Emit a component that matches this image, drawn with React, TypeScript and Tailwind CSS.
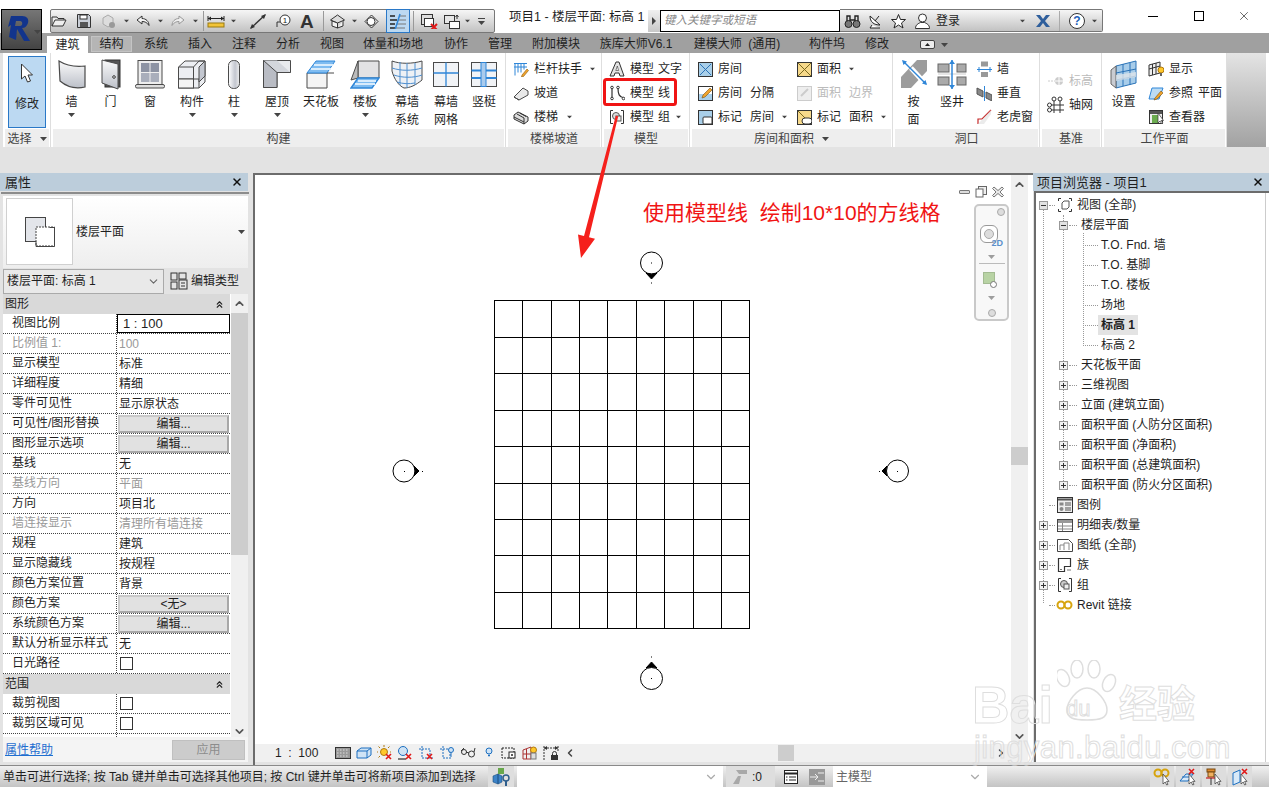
import type { ReactNode } from "react";
import { ChevronDown, ChevronLeft, ChevronRight, ChevronUp, ChevronsUp, X } from "lucide-react";

// shared svg wrapper, coordinates are in px of the icon
function Ic({ w = 16, h = 16, children, className = "" }: { w?: number; h?: number; children: ReactNode; className?: string }) {
  return (
    <svg width={w} height={h} viewBox={`0 0 ${w} ${h}`} className={`shrink-0 ${className}`} fill="none">
      {children}
    </svg>
  );
}

function Caret({ className = "" }: { className?: string }) {
  return (
    <svg width="7" height="4" viewBox="0 0 7 4" className={`shrink-0 ${className}`}>
      <path d="M0 0h7L3.5 4z" fill="#444" />
    </svg>
  );
}

const L = "#4a4a4a";
const B = "#2f86d8";

/* ---------- quick access icons ---------- */
const QOpen = () => (
  <Ic w={17}><path d="M1 13V4h5l1 1.500h6V7M1 13l3-6h11l-3 6z" stroke="#333" fill="#eee" /></Ic>
);
const QSave = () => (
  <Ic w={16}><path d="M1.500 1.500h11l2 2v11h-13z" stroke="#333" fill="#c9ced6" /><rect x="4" y="2" width="7" height="4" fill="#fff" stroke="#333" /><rect x="4" y="9" width="8" height="5" fill="#555" /></Ic>
);
const QSync = () => (
  <Ic w={17}><path d="M3 5l5-3 5 3v6l-5 3-5-3z" stroke="#aaa" fill="#ddd" /><circle cx="12" cy="12" r="3" fill="#999" /></Ic>
);
const QUndo = () => (
  <Ic w={16}><path d="M7 3L2 7l5 4V8.500c3 0 5 1 7 4 0-4-3-7-7-7z" stroke="#333" fill="#f4f4f4" /></Ic>
);
const QRedo = () => (
  <Ic w={16}><path d="M9 3l5 4-5 4V8.500c-3 0-5 1-7 4 0-4 3-7 7-7z" stroke="#999" fill="#eee" /></Ic>
);
const QMeasure = () => (
  <Ic w={18}><path d="M1 3v5M17 3v5M1 5.500h16" stroke="#222" /><path d="M1 5.500l3-2v4zM17 5.500l-3-2v4z" fill="#222" /><rect x="1" y="10" width="16" height="4" fill="#f2c438" stroke="#9a7a10" /></Ic>
);
const QAlign = () => (
  <Ic w={18}><path d="M2 15L16 2" stroke="#333" strokeWidth="1.400" /><path d="M1 16l2-5 3 3zM17 1l-5 2 3 3z" fill="#333" /></Ic>
);
const QTag = () => (
  <Ic w={18}><path d="M2 14V9h3" stroke="#333" /><circle cx="10" cy="7" r="5" stroke="#333" fill="#fff" /><text x="10" y="10" fontSize="8" textAnchor="middle" fill="#222">1</text></Ic>
);
const QHome = () => (
  <Ic w={17}><path d="M1.500 7L8.500 2l7 5-7 3z" fill="#ddd" stroke="#333" /><path d="M3 8v5l5.500 2V10zM14 8v5l-5.500 2" fill="#f3f3f3" stroke="#333" /></Ic>
);
const QThin = () => (
  <Ic w={17}><path d="M2 8.500L8.500 2l6.500 6.500L8.500 15z" stroke="#333" fill="#e6e6e6" /><circle cx="8" cy="8.500" r="4" fill="#fff" stroke="#333" /></Ic>
);
const QLines = () => (
  <Ic w={18}><path d="M1 3h5M1 7h7M1 11h5M1 15h5" stroke="#222" strokeWidth="1.500" /><path d="M10 3h7M9 7h8M8 11h9M7 15h9" stroke="#777" /><path d="M11 1L6 17" stroke={B} strokeWidth="1.500" /></Ic>
);
const QClose = () => (
  <Ic w={18}><rect x="1.500" y="1.500" width="11" height="10" stroke="#333" fill="#ddd" /><rect x="4.500" y="5.500" width="9" height="8" stroke="#333" fill="#fff" /><path d="M11 11l6 6M17 11l-6 6" stroke="#e01818" strokeWidth="2" /></Ic>
);
const QSwitch = () => (
  <Ic w={18}><rect x="1.500" y="2.500" width="10" height="8" stroke="#333" fill="#e6e6e6" /><rect x="6.500" y="8.500" width="10" height="7" stroke="#333" fill="#fff" /><path d="M14 2v4M12.500 4L14 2l1.500 2" stroke="#333" /></Ic>
);

/* ---------- large ribbon icons (30px tall) ---------- */
const Cursor = () => (
  <Ic w={14} h={22}><path d="M1.500 1v15l3.500-3 2.500 6 3-1-2.500-6h4.500z" fill="#fff" stroke="#333" /></Ic>
);
const IcWall = () => (
  <Ic w={30} h={31}><path d="M2 2c8 5 17 6 26 5v21c-9 2-18 0-25-6z" fill="url(#gpanel)" stroke={L} strokeWidth="1.200" /></Ic>
);
const IcDoor = () => (
  <Ic w={22} h={31}><rect x="5" y="1" width="15" height="27" fill="#555" stroke="#333" /><path d="M2 1l16 4v25L2 24z" fill="url(#gpanel)" stroke={L} /><circle cx="14" cy="18" r="1.300" fill="#fff" stroke="#333" /></Ic>
);
const IcWindow = () => (
  <Ic w={30} h={31}><rect x="3" y="1.500" width="24" height="24" fill="#eee" stroke={L} /><rect x="6" y="4" width="8.500" height="9" fill="#8d93a3" /><rect x="15.500" y="4" width="8.500" height="9" fill="#8d93a3" /><rect x="6" y="14" width="8.500" height="9" fill="#a9aebb" /><rect x="15.500" y="14" width="8.500" height="9" fill="#a9aebb" /><rect x="0.500" y="25.500" width="29" height="3.500" rx="1.500" fill="#ddd" stroke={L} /></Ic>
);
const IcComp = () => (
  <Ic w={30} h={31}><path d="M1.500 8L8 2h20v21l-6 6H1.500z" fill="#eceef2" stroke={L} /><path d="M1.500 8h15v12H1.500zM16.500 8L22 2h6" stroke={L} /><path d="M16.500 20H22v9" stroke={L} /><path d="M22 8v15l6-6V2z" fill="#c3c7d0" stroke={L} /><rect x="1.500" y="20" width="15" height="9" fill="#f4f4f4" stroke={L} /></Ic>
);
const IcColumn = () => (
  <Ic w={14} h={31}><rect x="1.500" y="1.500" width="11" height="28" rx="5" fill="url(#gcol)" stroke={L} /></Ic>
);
const IcRoof = () => (
  <Ic w={30} h={31}><path d="M1.500 1.500h27v12H15v15H1.500z" fill="#e9ebee" stroke={L} /><path d="M1.500 1.500L15 13.500h13.500L15 1.500z" fill="#d3d6dc" /><path d="M1.500 1.500V28.500H15V13.500z" fill="#b9bcc4" stroke={L} /><path d="M15 13.500h13.500" stroke={L} /></Ic>
);
const IcCeiling = () => (
  <Ic w={30} h={31}><path d="M1 14v15h20V14z" fill="#f4f4f4" stroke={L} /><path d="M1 14L10 2h19l-8 12z" fill="#7fbcf1" stroke={B} /><path d="M5 10h20M8 6h19" stroke="#d9ecfc" strokeWidth="2" /><path d="M21 14h7" stroke={L} /></Ic>
);
const IcFloor = () => (
  <Ic w={30} h={31}><path d="M8 2h21v17H8z" fill="#e2e2e4" stroke={L} /><path d="M1 21L8 2v17z" fill="#bbb" stroke={L} /><path d="M1 29l7-10h21l-7 10z" fill="#7fbcf1" stroke={B} strokeWidth="1.400" /><path d="M5 25h20M8 22h18" stroke="#d9ecfc" strokeWidth="2" /></Ic>
);
const IcCurtainSys = () => (
  <Ic w={32} h={31}><path d="M1 2c8 3 20 3 30 0v19c-6 5-12 8-18 8C8 27 3 20 1 12z" fill="#eef1f5" stroke={L} /><path d="M1 9c9 3 20 3 30 0M3 16c8 3 20 3 28 0M6 23c6 2 12 2 18 1M9 3v23M16 4v25M24 4v22" stroke="#4f8fcf" /></Ic>
);
const IcCurtainGrid = () => (
  <Ic w={28} h={31}><rect x="1.500" y="3.500" width="25" height="24" fill="#f1f3f6" stroke={L} /><path d="M1.500 14h25M14 3.500v24" stroke={B} strokeWidth="1.300" /></Ic>
);
const IcMullion = () => (
  <Ic w={28} h={31}><rect x="1.500" y="3.500" width="25" height="24" fill="#f1f3f6" stroke={L} /><path d="M1.500 11.500h25M1.500 19h25" stroke={B} strokeWidth="2" /><rect x="11" y="3.500" width="5" height="24" fill="#a9cbed" stroke={B} /></Ic>
);
const IcByFace = () => (
  <Ic w={30} h={31}><path d="M18 1h10v11L12 29H2V18z" fill="#9c9c9c" /><path d="M12 9L22 20" stroke="#fff" strokeWidth="5" /><path d="M5 3l22 22" stroke={B} strokeWidth="1.500" /><path d="M3 1l5 1.500L4.500 6zM28 26l-5-1.500 3.500-3.500z" fill={B} /></Ic>
);
const IcShaft = () => (
  <Ic w={30} h={31}><rect x="1" y="5" width="11" height="8" fill="#aaa" stroke="#666" /><rect x="20" y="5" width="9" height="8" fill="#aaa" stroke="#666" /><rect x="1" y="18" width="11" height="8" fill="#aaa" stroke="#666" /><rect x="20" y="18" width="9" height="8" fill="#aaa" stroke="#666" /><path d="M1 15h28" stroke="#ccc" /><path d="M15 1v29" stroke={B} strokeWidth="1.500" /><path d="M12 5l3-4 3 4zM12 26l3 4 3-4z" fill={B} /></Ic>
);
const IcWpSet = () => (
  <Ic w={28} h={31}><path d="M6 7L26 2v22L6 29z" fill="#a8cdea" stroke="#2a73b8" /><path d="M1 11l5-4v22l-5-4z" fill="#c9ccd2" stroke="#666" /><path d="M6 14l20-4M6 21l20-4M13 5v22M20 4v22" stroke="#2a73b8" /><path d="M6 16l20-3v5l-20 4z" fill="#dfe5ea" opacity=".8" /></Ic>
);

/* ---------- small ribbon icons ---------- */
const IRail = () => (
  <Ic><path d="M1 2.500h13M2 2.500v12M5 2.500v9M8 2.500v9M11 2.500v6" stroke={B} /><path d="M1 6h13" stroke={B} /><path d="M9 14l5-6 1.500 1.500-5 6-2 .5z" fill="#f0a42c" stroke="#8a5a10" strokeWidth=".6" /></Ic>
);
const IRamp = () => (
  <Ic><path d="M1 12L10 3l5 3v4l-9 5z" fill="#e9e9e9" stroke={L} /><path d="M1 12l5 3" stroke={L} /></Ic>
);
const IStair = () => (
  <Ic><path d="M1 6l4-3 10 5v4l-4 3L1 10z" fill="#dcdcdc" stroke="#333" /><path d="M4 5l7 4v6M7 4l6 3.500M1 8l10 5" stroke="#333" /></Ic>
);
const IModelText = () => (
  <Ic><path d="M1 15L7 1h3l5 14h-4l-1-3H6l-1 3z" fill="#e4e4e4" stroke="#333" /><path d="M6.800 9.500h2.800L8.300 5z" fill="#fff" stroke="#333" strokeWidth=".6" /></Ic>
);
const IModelLine = () => (
  <Ic><path d="M3 3v10M9 3c0 6 1 9 6 10" stroke="#333" strokeWidth="1.200" /><circle cx="3" cy="2.500" r="1.300" fill="#fff" stroke="#333" /><circle cx="3" cy="13.500" r="1.300" fill="#fff" stroke="#333" /><circle cx="9" cy="2.500" r="1.300" fill="#fff" stroke="#333" /><circle cx="14.500" cy="13.500" r="1.300" fill="#fff" stroke="#333" /></Ic>
);
const IBracket = ({ fill = "#ddd" }: { fill?: string }) => (
  <Ic><path d="M4 1.500H1.500v13H4M12 1.500h2.500v13H12" stroke="#333" /><circle cx="7" cy="7" r="3.500" fill={fill} stroke="#555" /><rect x="7" y="7" width="5" height="5" fill="#eee" stroke="#555" /></Ic>
);
const IRoom = () => (
  <Ic><rect x="1.500" y="1.500" width="14" height="14" fill="#a9cfe9" stroke="#333" /><path d="M3 3l11 11M14 3L3 14" stroke="#2a73b8" /></Ic>
);
const IRoomSep = () => (
  <Ic><rect x="1.500" y="1.500" width="14" height="14" fill="#fff" stroke="#333" /><rect x="2" y="9" width="13" height="6" fill="#a9cfe9" /><path d="M6 10l7-7 2 2-7 7-3 1z" fill="#f0a42c" stroke="#7a5010" strokeWidth=".6" /></Ic>
);
const IRoomTag = () => (
  <Ic><rect x="1.500" y="1.500" width="14" height="14" fill="#a9cfe9" stroke="#333" /><rect x="6" y="8" width="9" height="7" rx="1" fill="#fff" stroke="#333" /></Ic>
);
const IArea = () => (
  <Ic><rect x="1.500" y="1.500" width="14" height="14" fill="#f7d98a" stroke="#333" /><path d="M2 2l13 13M15 2L2 15" stroke="#7a6a20" /></Ic>
);
const IAreaBound = () => (
  <Ic><rect x="1.500" y="1.500" width="14" height="14" fill="#eee" stroke="#ccc" /><path d="M5 11l7-7" stroke="#ccc" strokeWidth="2" /></Ic>
);
const IAreaTag = () => (
  <Ic><rect x="1.500" y="1.500" width="14" height="14" fill="#f7d98a" stroke="#333" /><path d="M2 2l13 13" stroke="#7a6a20" /><rect x="6" y="9" width="10" height="6" rx="3" fill="#fff" stroke="#333" /></Ic>
);
const IOpenWall = () => (
  <Ic><rect x="5" y="0.500" width="7" height="5" fill="#999" /><rect x="5" y="11" width="7" height="5" fill="#999" /><path d="M1 8.500h15" stroke={B} /><path d="M3 6v5M14 6v5" stroke={B} /></Ic>
);
const IVertical = () => (
  <Ic><path d="M1 3l6 3v6L1 9zM10 7l6 3v6l-6-3z" fill="#888" stroke="#555" /><path d="M8.500 1v15" stroke={B} /></Ic>
);
const IDormer = () => (
  <Ic><path d="M2 15V10h4L15 1" stroke="#c62828" strokeWidth="1.200" /><path d="M2 15l13-14v4L8 15z" fill="#ddd" opacity=".6" /></Ic>
);
const ILevel = () => (
  <Ic w={18}><path d="M1 8h8" stroke="#ccc" strokeDasharray="2 1" /><circle cx="12" cy="8" r="4" fill="#ccc" /><path d="M8 8h8M12 4v8" stroke="#fff" /></Ic>
);
const IGrid = () => (
  <Ic w={18} h={18}><path d="M7 4v13M13 4v13M1 9h16M1 14h16" stroke="#333" /><circle cx="7" cy="3" r="2" fill="#fff" stroke="#333" /><circle cx="13" cy="3" r="2" fill="#fff" stroke="#333" /><circle cx="2.500" cy="9" r="2" fill="#fff" stroke="#333" /><circle cx="2.500" cy="14" r="2" fill="#fff" stroke="#333" /></Ic>
);
const IWpShow = () => (
  <Ic><path d="M1 4l11-3v11L1 15z" fill="#eee" stroke="#333" /><path d="M4.500 3v11M8 2v11M1 8l11-3" stroke="#333" /><circle cx="13" cy="9" r="3" fill="#ffc72a" stroke="#b07a10" /><rect x="12" y="12" width="2" height="3" fill="#666" /></Ic>
);
const IRefPlane = () => (
  <Ic><path d="M4 3h11l-4 11H1z" fill="#bcdcf4" stroke={B} /><path d="M7 13l6-7 2 2-6 6-3 1z" fill="#f0a42c" stroke="#7a5010" strokeWidth=".6" /></Ic>
);
const IViewer = () => (
  <Ic><rect x="1.500" y="1.500" width="13" height="13" fill="#eee" stroke="#333" /><rect x="2" y="2" width="12" height="3" fill="#555" /><rect x="4" y="6" width="7" height="8" fill="#6bab4f" /><path d="M10 4v10l2-2 2 3 1-1-2-2.500h2.500z" fill="#fff" stroke="#333" strokeWidth=".7" /></Ic>
);

/* ---------- status and view bar icons ---------- */
const XMark = ({ x = 9, y = 9 }: { x?: number; y?: number }) => (
  <path d={`M${x} ${y}l5 5M${x + 5} ${y}l-5 5`} stroke="#e01818" strokeWidth="1.600" />
);
const VDetail = () => (
  <Ic><rect x="0.500" y="2.500" width="15" height="11" fill="#999" stroke="#333" /><path d="M2 5h12M2 8h12M2 11h12" stroke="#ddd" strokeDasharray="1.500 1.500" /></Ic>
);
const VCube = () => (
  <Ic><path d="M1 6l4-3h10v7l-4 3H1z" fill="#cfe3f5" stroke="#1c6fc0" /><path d="M1 6h10v7M11 6l4-3" stroke="#1c6fc0" /></Ic>
);
const VSun = () => (
  <Ic><circle cx="7" cy="7" r="3.500" fill="#ffc72a" stroke="#b07a10" /><path d="M7 0v2M1 7H0M3 3L1.500 1.500M11 3l1.500-1.500M3 11l-1.500 1.500M14 7h-1" stroke="#b07a10" /><XMark /></Ic>
);
const VShadow = () => (
  <Ic><circle cx="6" cy="6" r="4.500" fill="#cfe3f5" stroke="#1c6fc0" /><path d="M1 14h8" stroke="#555" strokeWidth="1.500" /><XMark /></Ic>
);
const VCrop = () => (
  <Ic><path d="M4 1v12h11M1 4h11v7" stroke="#1c6fc0" strokeDasharray="2 1" /><XMark /></Ic>
);
const VCropOn = () => (
  <Ic><path d="M4 1v12h8M1 4h10v7" stroke="#1c6fc0" strokeDasharray="2 1" /><circle cx="12" cy="5" r="2.500" fill="#cfe3f5" stroke="#1c6fc0" /><path d="M12 8v4" stroke="#1c6fc0" /></Ic>
);
const VGlasses = () => (
  <Ic><circle cx="4" cy="7" r="2.500" stroke="#333" /><circle cx="11.500" cy="9" r="3" stroke="#333" /><path d="M6 7l3 1M1 6l3-3M14 7l1-4" stroke="#333" /></Ic>
);
const VBulb = () => (
  <Ic w={10}><circle cx="5" cy="6" r="3" fill="#cfe3f5" stroke="#1c6fc0" /><path d="M4 10.500h2" stroke="#1c6fc0" strokeWidth="1.500" /></Ic>
);
const VSheet = () => (
  <Ic><rect x="1" y="3" width="12" height="10" stroke="#222" strokeDasharray="2 1" /><rect x="8" y="7" width="6" height="6" fill="#fff" stroke="#222" /><circle cx="11" cy="10" r="1" fill="#222" /></Ic>
);
const VWp = () => (
  <Ic><path d="M1 5l8-3v12H1zM4.500 4v10M1 9h8" stroke="#a33" /><circle cx="11.500" cy="5" r="3" fill="#ffc72a" stroke="#b07a10" /><rect x="9" y="8" width="5" height="6" fill="#ddd" stroke="#777" /></Ic>
);
const VLock = () => (
  <Ic w={16}><path d="M1 1v14M15 1v5M1 3h14" stroke="#333" strokeDasharray="2 1" /><path d="M1 3l3-2v4zM15 3l-3-2v4z" fill="#333" /><rect x="8" y="10" width="7" height="5" fill="#333" /><path d="M9.500 10V8.500a2 2 0 014 0V10" stroke="#333" /></Ic>
);
const SWorkset = () => (
  <Ic w={18} h={20}><path d="M1 9l5-2v10l-5-2zM6 7l4 2v6l-4 2z" fill="#3c83c7" stroke="#1d4f80" strokeWidth=".6" /><rect x="6" y="1" width="6" height="6" fill="#68a84c" /><circle cx="14" cy="11" r="3" stroke="#2f5e8c" strokeWidth="1.500" /><path d="M14 14v5" stroke="#2f5e8c" strokeWidth="2" /></Ic>
);
const SPress = () => (
  <Ic w={18} h={18}><path d="M2 16l5-8h3L8 16zM5 2h11v4H8z" fill="#a8a8a8" /></Ic>
);
const SEditor = () => (
  <Ic w={16}><rect x="1.500" y="1.500" width="13" height="13" fill="#fff" stroke="#222" /><path d="M2 4.500h12" stroke="#222" strokeWidth="2" /><path d="M6 8h7M6 11h7M3 8h1.500M3 11h1.500" stroke="#222" /></Ic>
);
const SDesign = () => (
  <Ic w={16} h={16}><rect x="0" y="0" width="16" height="16" fill="#999" /><path d="M1 8h7M6 5l3 3-3 3M9 4h6M9 12h6" stroke="#eee" /></Ic>
);
const MouseArrow = () => <path d="M10 6v10l2.200-2 1.500 3 1.300-.6-1.400-3H16z" fill="#fff" stroke="#333" strokeWidth=".7" />;
const SLink = () => (
  <Ic w={18} h={18}><circle cx="5" cy="5" r="3.500" stroke="#d7a40e" strokeWidth="2" /><circle cx="12" cy="5" r="3.500" stroke="#d7a40e" strokeWidth="2" /><MouseArrow /></Ic>
);
const SUnderlay = () => (
  <Ic w={18} h={18}><path d="M1 13l6-7h7l-5 7z" stroke="#1c6fc0" fill="#d8e9f8" /><path d="M3 9h9" stroke="#1c6fc0" /><XMark x={10} y={1} /><MouseArrow /></Ic>
);
const SPin = () => (
  <Ic w={18} h={18}><rect x="2" y="1" width="8" height="3" fill="#e08a2c" stroke="#7a4a10" /><rect x="3" y="4" width="6" height="5" fill="#f0b060" stroke="#7a4a10" /><path d="M1 10h10" stroke="#c44" strokeWidth="1.500" /><path d="M6 10v7" stroke="#333" /><MouseArrow /></Ic>
);
const SFace = () => (
  <Ic w={18} h={18}><path d="M2 5l7-3v12l-7 3z" fill="#d8e9f8" stroke="#1c6fc0" /><XMark x={11} y={1} /><MouseArrow /></Ic>
);

/* ---------- tree icons ---------- */
const TView = () => (
  <Ic><path d="M4 1.500H1.500V4M12 1.500h2.500V4M4 14.500H1.500V12M12 14.500h2.500V12" stroke="#333" /><path d="M5 6l2-2h5v6l-2 2H5z" fill="#fff" stroke="#555" /></Ic>
);
const TLegend = () => (
  <Ic><rect x="0.500" y="0.500" width="15" height="15" fill="#eee" stroke="#333" /><path d="M1 2.500h14" stroke="#555" strokeWidth="2" /><rect x="2.500" y="5.500" width="4" height="3" fill="#888" /><circle cx="4.500" cy="12" r="2" fill="#888" /><path d="M8 6h6M8 8h6M8 11h6M8 13h6" stroke="#555" /></Ic>
);
const TSched = () => (
  <Ic><rect x="0.500" y="2.500" width="15" height="12" fill="#fff" stroke="#444" /><rect x="1" y="3" width="14" height="3" fill="#999" /><path d="M1 9h14M1 12h14M5.500 6v8" stroke="#888" /></Ic>
);
const TSheet = () => (
  <Ic><path d="M0.500 2.500h11l4 4v8H0.500z" fill="#fff" stroke="#444" /><path d="M3 13V8h4V6h5v7M7 8v5" stroke="#888" /></Ic>
);
const TFamily = () => (
  <Ic><path d="M1.500 1.500h12v8h-6v5h-6z" stroke="#333" strokeWidth="1.200" fill="#fff" /><path d="M3 12.500h2M10 13h4" stroke="#777" /></Ic>
);
const TLink = () => (
  <Ic w={17}><circle cx="5" cy="8" r="3.500" stroke="#d7a40e" strokeWidth="2" /><circle cx="12" cy="8" r="3.500" stroke="#d7a40e" strokeWidth="2" /></Ic>
);
const Toggle = ({ minus = false, shade = false }: { minus?: boolean; shade?: boolean }) => (
  <svg width="9" height="9" viewBox="0 0 9 9" className="shrink-0">
    <rect x=".5" y=".5" width="8" height="8" fill={shade ? "#e2e2e2" : "#f2f2f2"} stroke="#999" />
    <path d={minus ? "M2 4.500h5" : "M2 4.500h5M4.500 2v5"} stroke="#333" />
  </svg>
);

/* ---------- ribbon parts ---------- */
function Panel({ w, title, caret, children }: { w: string; title: string; caret?: boolean; children: ReactNode }) {
  return (
    <div className={`flex h-full flex-col border-r border-[#dedede] ${w}`}>
      <div className="flex h-[76px] overflow-hidden">{children}</div>
      <div className="mr-px ml-[2px] flex h-[18px] items-center justify-center gap-2 bg-[#eeeeee] pt-[2px] text-[#444]">
        {title}
        {caret && <Caret />}
      </div>
    </div>
  );
}

function Big({ w, icon, label, second, caret }: { w: string; icon: ReactNode; label: string; second?: string; caret?: boolean }) {
  return (
    <div className={`flex shrink-0 flex-col items-center pt-[6px] ${w}`}>
      <div className="flex h-[31px] items-center justify-center">{icon}</div>
      <div className="mt-[3px] leading-[18px] whitespace-nowrap">{label}</div>
      {second && <div className="leading-[18px]">{second}</div>}
      {caret && <Caret className="mt-[2px]" />}
    </div>
  );
}

function Small({ icon, children, className = "" }: { icon: ReactNode; children?: ReactNode; className?: string }) {
  return (
    <div className={`flex h-[24px] items-center whitespace-nowrap ${className}`}>
      <div className="mr-[5px] flex w-[16px] justify-center">{icon}</div>
      {children}
    </div>
  );
}

/* ---------- properties ---------- */
type Prop = { k: string; v?: string; dim?: boolean; btn?: boolean; input?: boolean; check?: boolean };

const GRAPHICS: Prop[] = [
  { k: "视图比例", v: "1 : 100", input: true },
  { k: "比例值 1:", v: "100", dim: true },
  { k: "显示模型", v: "标准" },
  { k: "详细程度", v: "精细" },
  { k: "零件可见性", v: "显示原状态" },
  { k: "可见性/图形替换", v: "编辑...", btn: true },
  { k: "图形显示选项", v: "编辑...", btn: true },
  { k: "基线", v: "无" },
  { k: "基线方向", v: "平面", dim: true },
  { k: "方向", v: "项目北" },
  { k: "墙连接显示", v: "清理所有墙连接", dim: true },
  { k: "规程", v: "建筑" },
  { k: "显示隐藏线", v: "按规程" },
  { k: "颜色方案位置", v: "背景" },
  { k: "颜色方案", v: "<无>", btn: true },
  { k: "系统颜色方案", v: "编辑...", btn: true },
  { k: "默认分析显示样式", v: "无" },
  { k: "日光路径", check: true },
];

function PropRow({ k, v, dim, btn, input, check }: Prop) {
  return (
    <div className={`flex h-[20px] border-b border-dotted border-[#444] ${dim ? "text-[#999]" : ""}`}>
      <div className="w-[113px] shrink-0 truncate pl-[9px] leading-[19px] whitespace-nowrap">{k}</div>
      <div className="flex flex-1 items-center border-l border-dotted border-[#444] whitespace-nowrap">
        {input && (
          <div className="h-[19px] w-full border border-black pl-[5px] text-[13px] leading-[17px]">{v}</div>
        )}
        {btn && (
          <div className="mx-px flex h-[18px] flex-1 items-center justify-center border-2 border-[#a8a8a8] border-t-[#c9c9c9] border-l-[#c9c9c9] bg-[#e1e1e1]">
            {v}
          </div>
        )}
        {!input && !btn && !check && <span className="pl-[2px]">{v}</span>}
        {check && <div className="ml-[3px] size-[13px] border border-[#333] bg-white" />}
      </div>
    </div>
  );
}

function Category({ title }: { title: string }) {
  return (
    <div className="flex h-[20px] items-center justify-between bg-[#d9d9d9] pr-[5px] pl-[2px]">
      {title}
      <ChevronsUp size={11} strokeWidth={2.500} className="text-[#222]" />
    </div>
  );
}

function PropertiesPanel() {
  return (
    <div className="flex h-full w-[253px] shrink-0 flex-col">
      <div className="flex h-[18px] w-[248px] items-center justify-between bg-[#bccddb] pr-[5px] pl-[5px] text-[13px]">
        属性
        <X size={12} strokeWidth={3} className="text-[#111]" />
      </div>
      <div className="ml-[1px] flex h-[5px] w-[248px] items-start pt-[1px]">
        <div className="h-[2px] w-full bg-[#8c8c8c]" />
      </div>
      <div className="ml-[3px] flex h-[72px] w-[245px] bg-linear-to-b from-white to-[#eeeeee] pt-[2px] pb-[3px] pl-[3px]">
        <div className="flex h-[67px] w-[67px] items-center justify-center border border-[#d0d0d0] bg-white">
          <Ic w={32} h={32}>
            <rect x="1.500" y="1.500" width="20" height="24" fill="#e3e5ea" stroke="#444" />
            <rect x="12" y="11" width="18.500" height="19" fill="#fff" stroke="#444" strokeDasharray="2 1" />
            <path d="M12 25.500v5h18.500v-19h-5" stroke="#444" />
          </Ic>
        </div>
        <div className="ml-[3px] flex flex-1 items-center">楼层平面</div>
        <div className="flex items-center pr-[3px]">
          <Caret />
        </div>
      </div>
      <div className="ml-[3px] flex h-[26px] w-[245px] items-center">
        <div className="flex h-[25px] w-[161px] items-center justify-between border border-[#aaaaaa] bg-[#e9e9e9] px-[3px]">
          楼层平面: 标高 1
          <ChevronDown size={13} className="text-[#666]" />
        </div>
        <div className="ml-[6px] flex items-center">
          <Ic w={18} h={18}>
            <rect x="1" y="1" width="6" height="7" stroke="#333" />
            <rect x="9" y="1" width="7" height="6" stroke="#333" />
            <rect x="1" y="10" width="6" height="7" stroke="#333" />
            <rect x="9" y="8" width="8" height="9" fill="#e6e6e6" stroke="#333" />
            <path d="M11 11h4M11 14h4" stroke="#333" />
          </Ic>
          <span className="ml-[3px]">编辑类型</span>
        </div>
      </div>
      <div className="ml-[3px] flex h-[443px] w-[245px] overflow-hidden bg-white">
        <div className="w-[227px]">
          <Category title="图形" />
          {GRAPHICS.map((p) => (
            <PropRow key={p.k} {...p} />
          ))}
          <Category title="范围" />
          <PropRow k="裁剪视图" check />
          <PropRow k="裁剪区域可见" check />
          <PropRow k="" />
        </div>
        <div className="ml-px flex w-[17px] flex-col items-center bg-[#f0f0f0]">
          <ChevronUp size={13} strokeWidth={3} className="my-[3px] shrink-0 text-[#555]" />
          <div className="h-[242px] w-full shrink-0 bg-[#cdcdcd]" />
          <ChevronDown size={13} strokeWidth={3} className="mt-[170px] shrink-0 text-[#555]" />
        </div>
      </div>
      <div className="ml-[3px] flex h-[25px] w-[245px] items-center justify-between bg-[#f4f4f4] pr-[3px] pl-[2px]">
        <span className="text-[#1f6fd0] underline">属性帮助</span>
        <div className="flex h-[20px] w-[73px] items-center justify-center border border-[#c0c0c0] bg-[#cccccc] text-[#8c8c8c]">应用</div>
      </div>
      <div className="h-[3px]" />
    </div>
  );
}

/* ---------- drawing area ---------- */
const GRID_X = [494, 522, 551, 579, 607, 636, 664, 693, 721, 749];
const GRID_Y = [300, 337, 373, 410, 446, 483, 519, 555, 592, 628];

function Drawing() {
  return (
    <svg viewBox="255 175 756 569" className="absolute inset-0 h-full w-full" shapeRendering="crispEdges">
      {GRID_X.map((x) => (
        <line key={x} x1={x + 0.5} x2={x + 0.5} y1={300} y2={629} stroke="#000" />
      ))}
      {GRID_Y.map((y) => (
        <line key={y} y1={y + 0.5} y2={y + 0.5} x1={494} x2={750} stroke="#000" />
      ))}
      <g shapeRendering="auto" stroke="#000" fill="#fff">
        <circle cx="651.500" cy="263" r="11" />
        <circle cx="651.500" cy="678.500" r="11" />
        <circle cx="404" cy="471" r="11" />
        <circle cx="897.500" cy="471" r="11" />
        <path d="M646 273l5.500 6 5.500-6c-4 1.500-7 1.500-11 0z" fill="#000" />
        <path d="M646 668l5.500-6 5.500 6c-4-1.500-7-1.500-11 0z" fill="#000" />
        <path d="M414 466l5 5-5 5c1.500-4 1.500-6 0-10z" fill="#000" />
        <path d="M887 466l-5 5 5 5c-1.500-4-1.500-6 0-10z" fill="#000" />
        <path d="M651 263h1M651 678.500h1M404 471.500h1M897 471.500h1M651 283h1M651 657h1M422 471.500h1M879 471.500h1" fill="none" />
      </g>
    </svg>
  );
}

function ViewControls() {
  return (
    <>
      <div className="absolute top-[11px] left-[704px] flex items-center gap-[5px]">
        <div className="h-[4px] w-[11px] rounded-[1px] border border-[#777] bg-[#ddd]" />
        <Ic w={12} h={12}>
          <rect x="3.500" y=".5" width="8" height="8" fill="#eee" stroke="#666" />
          <rect x="1" y="3" width="7" height="8" fill="#fff" stroke="#666" />
        </Ic>
        <Ic w={12} h={12}>
          <path d="M2 1l4 3.500L10 1l1.500 1.500L8 6l3.500 3.500L10 11 6 7.500 2 11 .5 9.500 4 6 .5 2.500z" fill="#e8e8e8" stroke="#777" />
        </Ic>
      </div>
      <div className="absolute top-[29px] left-[719px] flex h-[117px] w-[35px] flex-col items-center rounded-[5px] border-2 border-[#c9c9c9] bg-[#f8f8f8]">
        <div className="mt-[2px] mr-[2px] size-[8px] self-end rounded-full border border-[#aaa] bg-[#ddd]" />
        <div className="relative mt-[9px] h-[28px] w-[28px]">
          <div className="absolute top-0 left-[2px] size-[18px] rounded-[6px] border border-[#999] bg-white" />
          <div className="absolute top-[4px] left-[6px] size-[10px] rounded-full border border-[#aaa] bg-[#ddd]" />
          <span className="absolute top-[13px] left-[14px] text-[9px] leading-[11px] font-bold text-[#5a8fcb]">2D</span>
        </div>
        <Caret className="mt-[2px] opacity-50" />
        <div className="mt-[4px] h-px w-[26px] bg-[#bbb]" />
        <div className="relative mt-[8px] h-[18px] w-[18px]">
          <div className="h-[12px] w-[12px] border border-[#a3bb92] bg-[#b8d3a4]" />
          <div className="absolute top-[9px] left-[7px] size-[7px] rounded-full border border-[#777] bg-white" />
        </div>
        <Caret className="mt-[6px] opacity-50" />
        <div className="mt-auto mb-[2px] size-[8px] rounded-full border border-[#aaa] bg-[#ddd]" />
      </div>
    </>
  );
}

const VIEW_ICONS = [VDetail, VCube, VSun, VShadow, VCrop, VCropOn, VGlasses, VBulb, VSheet, VWp, VLock];

function CanvasArea() {
  return (
    <div className="flex h-full w-[780px] shrink-0 flex-col border-t-2 border-l-2 border-[#6c6c6c] bg-white">
      <div className="flex flex-1">
        <div className="relative w-[756px]">
          <Drawing />
          <ViewControls />
        </div>
        <div className="flex w-[17px] flex-col items-center bg-[#f0f0f0]">
          <ChevronUp size={13} strokeWidth={3} className="mt-[3px] text-[#555]" />
          <div className="mt-[256px] h-[18px] w-full bg-[#cdcdcd]" />
          <ChevronDown size={13} strokeWidth={3} className="mt-auto mb-[1px] text-[#555]" />
        </div>
      </div>
      <div className="flex h-[18px] w-[773px] items-center bg-[#f0f0f0]">
        <span className="ml-[20px] w-[60px] shrink-0 whitespace-pre">1  :  100</span>
        <div className="flex w-[224px] items-center justify-between">
          {VIEW_ICONS.map((V, i) => (
            <div key={i} className="flex w-[16px] justify-center">
              <V />
            </div>
          ))}
        </div>
        <ChevronLeft size={12} strokeWidth={3} className="ml-[5px] text-[#444]" />
        <div className="ml-[202px] h-[16px] w-[16px] bg-[#cdcdcd]" />
        <ChevronRight size={12} strokeWidth={3} className="ml-[201px] text-[#444]" />
      </div>
      <div className="h-[3px] bg-[#e3e3e3]" />
    </div>
  );
}

/* ---------- project browser ---------- */
function Root({ toggle, icon, label }: { toggle?: boolean; icon: ReactNode; label: string }) {
  return (
    <div className="flex h-[20px] items-center whitespace-nowrap">
      <div className="ml-[3px] w-[9px]">{toggle && <Toggle />}</div>
      <div className="ml-[1px] w-[6px] border-t border-dotted border-[#999]" />
      <div className="ml-px flex w-[17px] justify-center">{icon}</div>
      <span className="ml-[4px]">{label}</span>
    </div>
  );
}

function Branch({ label, minus }: { label: string; minus?: boolean }) {
  return (
    <div className="flex h-[20px] items-center whitespace-nowrap">
      <div className="ml-[23px] w-[9px]">
        <Toggle minus={minus} shade={minus} />
      </div>
      <div className="ml-px w-[8px] border-t border-dotted border-[#999]" />
      <span className="ml-[4px]">{label}</span>
    </div>
  );
}

function Leaf({ label, active }: { label: string; active?: boolean }) {
  return (
    <div className="flex h-[20px] items-center whitespace-nowrap">
      <div className="ml-[47px] w-[15px] border-t border-dotted border-[#999]" />
      <span className={`px-[3px] leading-[20px] ${active ? "bg-[#e3e3e3] font-bold" : ""}`}>{label}</span>
    </div>
  );
}

function ProjectBrowser() {
  return (
    <div className="flex h-full w-[236px] shrink-0 flex-col">
      <div className="flex h-[18px] items-center justify-between bg-[#bccddb] pr-[5px] pl-[4px] text-[13px]">
        项目浏览器 - 项目1
        <X size={12} strokeWidth={3} className="text-[#111]" />
      </div>
      <div className="ml-[1px] flex flex-1 flex-col border-t-2 border-l-2 border-[#6c6c6c] bg-white">
        <div className="relative mr-[3px] flex-1 border-r border-[#ccc] pt-[2px]">
          <div className="absolute top-[16px] left-[7px] h-[394px] border-l border-dotted border-[#999]" />
          <div className="absolute top-[22px] left-[27px] h-[270px] border-l border-dotted border-[#999]" />
          <div className="absolute top-[40px] left-[47px] h-[111px] border-l border-dotted border-[#999]" />
          <div className="relative">
            <div className="flex h-[20px] items-center whitespace-nowrap">
              <div className="ml-[3px]"><Toggle minus shade /></div>
              <div className="ml-px w-[6px] border-t border-dotted border-[#999]" />
              <div className="ml-px flex w-[17px] justify-center"><TView /></div>
              <span className="ml-[4px]">视图 (全部)</span>
            </div>
            <Branch label="楼层平面" minus />
            <Leaf label="T.O. Fnd. 墙" />
            <Leaf label="T.O. 基脚" />
            <Leaf label="T.O. 楼板" />
            <Leaf label="场地" />
            <Leaf label="标高 1" active />
            <Leaf label="标高 2" />
            <Branch label="天花板平面" />
            <Branch label="三维视图" />
            <Branch label="立面 (建筑立面)" />
            <Branch label="面积平面 (人防分区面积)" />
            <Branch label="面积平面 (净面积)" />
            <Branch label="面积平面 (总建筑面积)" />
            <Branch label="面积平面 (防火分区面积)" />
            <Root icon={<TLegend />} label="图例" />
            <Root toggle icon={<TSched />} label="明细表/数量" />
            <Root toggle icon={<TSheet />} label="图纸 (全部)" />
            <Root toggle icon={<TFamily />} label="族" />
            <Root toggle icon={<IBracket fill="#ccc" />} label="组" />
            <Root icon={<TLink />} label="Revit 链接" />
          </div>
        </div>
      </div>
      <div className="h-[3px]" />
    </div>
  );
}

/* ---------- page ---------- */
function TitleRow() {
  return (
    <div className="flex h-[33px] shrink-0 bg-white">
      <div className="mt-[9px] ml-[50px] flex h-[24px] w-[445px] shrink-0 items-center rounded-[2px] border border-[#777] bg-linear-to-b from-[#f6f6f6] to-[#c2c2c2]">
        <QOpen /><div className="ml-[8px]" /><QSave /><div className="ml-[8px]" /><QSync />
        <Caret className="ml-[6px] scale-75" /><div className="ml-[5px]" /><QUndo />
        <Caret className="ml-[6px] scale-75" /><div className="ml-[6px]" /><QRedo />
        <Caret className="ml-[6px] scale-75" />
        <div className="mr-[3px] ml-[4px] h-[20px] w-px bg-[#999]" />
        <QMeasure /><Caret className="ml-[5px] scale-75" /><div className="ml-[12px]" /><QAlign />
        <div className="ml-[8px]" /><QTag />
        <span className="ml-[7px] w-[18px] text-[19px] leading-none font-bold text-[#333]">A</span>
        <div className="mr-[5px] ml-[5px] h-[20px] w-px bg-[#999]" />
        <QHome /><Caret className="ml-[5px] scale-75" /><div className="ml-[5px]" /><QThin />
        <div className="ml-[6px] flex size-[24px] items-center justify-center border border-[#2a78c7] bg-[#bcd9f2]"><QLines /></div>
        <div className="mr-[6px] ml-[3px] h-[20px] w-px bg-[#999]" />
        <QClose /><div className="ml-[5px]" /><QSwitch />
        <Caret className="ml-[3px] scale-75" />
        <div className="ml-[7px] flex flex-col items-center gap-[2px]"><div className="h-px w-[7px] bg-[#444]" /><Caret /></div>
      </div>
      <div className="mt-[8px] ml-[14px] w-[139px] shrink-0 text-[12.500px] leading-[18px] whitespace-nowrap">项目1 - 楼层平面: 标高 1</div>
      <div className="mt-[10px] flex h-[22px] w-[12px] shrink-0 items-center justify-center bg-linear-to-b from-[#f0f0f0] to-[#c8c8c8]">
        <svg width="4" height="8" viewBox="0 0 4 8"><path d="M0 0l4 4-4 4z" fill="#444" /></svg>
      </div>
      <div className="mt-[10px] flex h-[22px] w-[180px] shrink-0 items-center border border-black bg-white pl-[3px] text-[11.500px] text-[#888] italic">键入关键字或短语</div>
      <div className="mt-[9px] flex h-[23px] w-[263px] shrink-0 items-center rounded-r-[2px] border-y border-r border-[#777] bg-linear-to-b from-[#f6f6f6] to-[#c2c2c2] pl-[4px]">
        <Ic w={17}><circle cx="4.500" cy="11" r="3.500" fill="#777" stroke="#222" /><circle cx="12.500" cy="11" r="3.500" fill="#777" stroke="#222" /><path d="M3 8V3h3v5M11 8V3h3v5M6 7h5" stroke="#222" strokeWidth="1.400" /></Ic>
        <Ic w={17} className="ml-[6px]"><path d="M3 3c0 6 4 9 10 9zM8 8l4-5M5 12l-2 3h10" stroke="#222" fill="#fff" /></Ic>
        <Ic w={17} className="ml-[6px]"><path d="M8.500 1.500l2 5h5l-4 3.500 1.500 5-4.500-3-4.500 3 1.500-5-4-3.500h5z" stroke="#222" fill="#fff" /></Ic>
        <Ic w={17} className="ml-[7px]"><circle cx="8.500" cy="5" r="4" fill="#fff" stroke="#333" /><path d="M1.500 15.500c0-4 3-5 5-6h4c2 1 5 2 5 6z" fill="#fff" stroke="#333" /></Ic>
        <span className="ml-[5px]">登录</span>
        <Caret className="ml-[59px] scale-75" />
        <svg width="16" height="14" viewBox="0 0 16 14" className="ml-[9px] shrink-0">
          <path d="M1 1h4l3 4 3-4h4l-5 6 5 6h-4L8 9l-3 4H1l5-6z" fill="#2f5f9c" />
        </svg>
        <div className="ml-[8px] h-[20px] w-px bg-[#aaa]" />
        <div className="ml-[9px] flex size-[16px] items-center justify-center rounded-full border border-[#333] bg-white text-[12px] font-bold text-[#1f5fb8]">?</div>
        <Caret className="ml-[6px] scale-75" />
      </div>
      <div className="mt-[4px] ml-[27px] flex h-[24px]">
        <div className="flex w-[46px] items-center justify-center"><div className="h-px w-[10px] bg-black" /></div>
        <div className="flex w-[45px] items-center justify-center"><div className="size-[10px] border border-black" /></div>
        <div className="flex w-[46px] items-center justify-center"><X size={14} strokeWidth={1} className="text-black" /></div>
      </div>
    </div>
  );
}

const TABS: [string, string][] = [
  ["系统", "w-[44px]"],
  ["插入", "w-[44px]"],
  ["注释", "w-[44px]"],
  ["分析", "w-[44px]"],
  ["视图", "w-[44px]"],
  ["体量和场地", "w-[78px]"],
  ["协作", "w-[48px]"],
  ["管理", "w-[40px]"],
  ["附加模块", "w-[72px]"],
  ["族库大师V6.1", "w-[88px]"],
  ["建模大师\u00a0\u00a0(通用)", "w-[114px]"],
  ["构件坞", "w-[66px]"],
  ["修改", "w-[34px]"],
];

function TabBar() {
  return (
    <div className="flex h-[20px] shrink-0 items-end bg-[#a0a0a0] pl-[47px] whitespace-nowrap">
      <div className="flex h-[17px] w-[41px] items-center justify-center bg-white pt-[1px]">建筑</div>
      <div className="mb-px ml-[3px] flex h-[16px] w-[41px] items-center justify-center border border-[#c4c4c4] bg-[#b5b5b5]">结构</div>
      <div className="ml-[2px] flex">
        {TABS.map(([t, w]) => (
          <div key={t} className={`flex h-[20px] items-center justify-center pt-[2px] ${w}`}>{t}</div>
        ))}
      </div>
      <div className="mb-[4px] ml-[26px] flex h-[9px] w-[15px] items-center justify-center rounded-[2px] border border-[#444] bg-[#eee]">
        <svg width="5" height="3" viewBox="0 0 5 3"><path d="M0 3l2.500-3L5 3z" fill="#222" /></svg>
      </div>
      <Caret className="mb-[6px] ml-[6px]" />
    </div>
  );
}

function Ribbon() {
  return (
    <div className="flex h-[94px] shrink-0 bg-[#e3e3e3] pl-[3px]">
      <div className="flex h-full bg-white">
        <Panel w="w-[48px]" title="选择" caret>
          <div className="mt-[3px] ml-[5px] flex h-[72px] w-[38px] flex-col items-center border border-[#2a78c7] bg-[#bcd9f2] pt-[6px]">
            <Cursor />
            <span className="mt-[13px]">修改</span>
          </div>
        </Panel>
        <Panel w="w-[455px]" title="构建">
          <Big w="w-[41px]" icon={<IcWall />} label="墙" caret />
          <Big w="w-[37px]" icon={<IcDoor />} label="门" />
          <Big w="w-[42px]" icon={<IcWindow />} label="窗" />
          <Big w="w-[42px]" icon={<IcComp />} label="构件" caret />
          <Big w="w-[42px]" icon={<IcColumn />} label="柱" caret />
          <Big w="w-[44px]" icon={<IcRoof />} label="屋顶" caret />
          <Big w="w-[44px]" icon={<IcCeiling />} label="天花板" />
          <Big w="w-[44px]" icon={<IcFloor />} label="楼板" caret />
          <Big w="w-[40px]" icon={<IcCurtainSys />} label="幕墙" second="系统" />
          <Big w="w-[38px]" icon={<IcCurtainGrid />} label="幕墙" second="网格" />
          <Big w="w-[38px]" icon={<IcMullion />} label="竖梃" />
        </Panel>
        <Panel w="w-[96px]" title="楼梯坡道">
          <div className="pt-[4px] pl-[7px]">
            <Small icon={<IRail />}>栏杆扶手<Caret className="ml-[7px] scale-75" /></Small>
            <Small icon={<IRamp />}>坡道</Small>
            <Small icon={<IStair />}>楼梯<Caret className="ml-[8px] scale-75" /></Small>
          </div>
        </Panel>
        <Panel w="w-[88px]" title="模型">
          <div className="pt-[4px] pl-[7px]">
            <Small icon={<IModelText />}>模型<span className="ml-[4px]">文字</span></Small>
            <Small icon={<IModelLine />}>模型<span className="ml-[4px]">线</span></Small>
            <Small icon={<IBracket />}>模型<span className="ml-[4px]">组</span><Caret className="ml-[5px] scale-75" /></Small>
          </div>
        </Panel>
        <Panel w="w-[203px]" title="房间和面积" caret>
          <div className="w-[106px] pt-[4px] pl-[7px]">
            <Small icon={<IRoom />}>房间</Small>
            <Small icon={<IRoomSep />}>房间<span className="ml-[8px]">分隔</span></Small>
            <Small icon={<IRoomTag />}>标记<span className="ml-[8px]">房间</span><Caret className="ml-[7px] scale-75" /></Small>
          </div>
          <div className="pt-[4px]">
            <Small icon={<IArea />}>面积<Caret className="ml-[7px] scale-75" /></Small>
            <Small icon={<IAreaBound />} className="text-[#bbb]">面积<span className="ml-[8px]">边界</span></Small>
            <Small icon={<IAreaTag />}>标记<span className="ml-[8px]">面积</span><Caret className="ml-[7px] scale-75" /></Small>
          </div>
        </Panel>
        <Panel w="w-[147px]" title="洞口">
          <Big w="w-[41px]" icon={<IcByFace />} label="按" second="面" />
          <Big w="w-[36px]" icon={<IcShaft />} label="竖井" />
          <div className="pt-[4px] pl-[6px]">
            <Small icon={<IOpenWall />}>墙</Small>
            <Small icon={<IVertical />}>垂直</Small>
            <Small icon={<IDormer />}>老虎窗</Small>
          </div>
        </Panel>
        <Panel w="w-[62px]" title="基准">
          <div className="pt-[16px] pl-[8px]">
            <Small icon={<ILevel />} className="text-[#bbb]">标高</Small>
            <Small icon={<IGrid />}>轴网</Small>
          </div>
        </Panel>
        <Panel w="w-[125px]" title="工作平面">
          <Big w="w-[43px]" icon={<IcWpSet />} label="设置" />
          <div className="pt-[4px] pl-[3px]">
            <Small icon={<IWpShow />}>显示</Small>
            <Small icon={<IRefPlane />}>参照<span className="ml-[5px]">平面</span></Small>
            <Small icon={<IViewer />}>查看器</Small>
          </div>
        </Panel>
      </div>
      <div className="h-full w-[39px] bg-linear-to-b from-[#e4e4e4] to-[#a2a2a2]" />
      <div className="h-full flex-1 bg-white" />
    </div>
  );
}

function StatusBar() {
  return (
    <div className="flex h-[22px] shrink-0 items-center border-t border-[#8a8a8a] bg-linear-to-b from-[#f0f0f0] to-[#c4c4c4]">
      <div className="w-[485px] shrink-0 pl-[3px] whitespace-nowrap">
        单击可进行选择; 按 Tab 键并单击可选择其他项目; 按 Ctrl 键并单击可将新项目添加到选择
      </div>
      <div className="ml-[3px] flex h-[21px] w-[26px] shrink-0 items-center justify-center bg-[#dedede]"><SWorkset /></div>
      <div className="ml-[3px] flex h-[21px] w-[206px] shrink-0 items-center justify-end bg-white pr-[5px]">
        <ChevronDown size={14} className="text-[#aaa]" />
      </div>
      <div className="ml-[3px] flex h-[21px] w-[49px] shrink-0 items-center bg-[#dedede] pl-[5px]">
        <SPress />
        <span className="ml-[3px]">:0</span>
      </div>
      <div className="ml-[8px]"><SEditor /></div>
      <div className="ml-[10px]"><SDesign /></div>
      <div className="ml-[8px] flex h-[21px] w-[154px] shrink-0 items-center justify-between bg-white pr-[5px] pl-[3px] text-[#666]">
        主模型
        <ChevronDown size={14} className="text-[#aaa]" />
      </div>
      <div className="ml-[163px] flex items-center gap-[2px]">
        {[SLink, SUnderlay, SPin, SFace].map((S, i) => (
          <div key={i} className="flex h-[21px] w-[24px] items-center justify-center bg-[#dddddd]">
            <S />
          </div>
        ))}
      </div>
    </div>
  );
}

// the callouts and the watermark lie on top of the whole window
function Annotations() {
  return (
    <>
      <svg viewBox="0 0 1269 787" className="pointer-events-none absolute inset-0 h-full w-full">
        <rect x="604.500" y="79.500" width="71" height="25" rx="2" fill="none" stroke="#f01414" strokeWidth="3" />
        <path d="M615.800 115.800L618.200 116.300L589 237.300L595 238.800L581 258L578 234.500L584 236z" fill="#f5201c" />
      </svg>
      <div className="absolute top-[199px] left-[643px] text-[21px] leading-[27px] whitespace-pre text-[#f01414]">使用模型线  绘制10*10的方线格</div>
      <AppButton />
      <Watermark />
    </>
  );
}

function AppButton() {
  return (
    <div className="absolute top-[9px] left-[1px] flex h-[41px] w-[41px] items-start border border-black bg-linear-to-b from-[#767676] to-[#444444] pt-[3px] pl-[5px]">
      <svg width="24" height="32" viewBox="0 0 24 32">
        <path fillRule="evenodd" d="M4 3h11c5 0 7 3 6 7-1 3-3 5-6 5l8 13h-6l-7-12-1 11-7-3 2-12-3 2zM9 8l-1 5h5c3 0 3-5 0-5z" fill="#12348c" />
      </svg>
      <Caret className="mt-[17px] ml-[3px]" />
    </div>
  );
}

function Watermark() {
  return (
    <div className="pointer-events-none absolute top-[660px] left-[972px] h-[105px] w-[240px] text-transparent [-webkit-text-stroke:1px_#dedede]">
      <span className="absolute top-[15px] left-0 text-[52px] leading-[60px] font-bold">Bai</span>
      <svg width="60" height="70" viewBox="0 0 60 70" className="absolute top-0 left-[85px]" fill="none" stroke="#dedede" strokeWidth="1.500">
        <ellipse cx="6" cy="18" rx="6" ry="9" transform="rotate(-25 6 18)" />
        <ellipse cx="20" cy="9" rx="6" ry="9" />
        <ellipse cx="37" cy="9" rx="6" ry="9" />
        <ellipse cx="52" cy="23" rx="6" ry="9" transform="rotate(25 52 23)" />
        <path d="M10 50c0-8 10-22 20-22s20 14 20 22c0 8-6 10-20 10S10 58 10 50z" />
      </svg>
      <span className="absolute top-[36px] left-[94px] text-[22px] leading-[26px]">du</span>
      <span className="absolute top-[21px] left-[147px] text-[38px] leading-[46px] font-bold">经验</span>
      <span className="absolute top-[70px] left-[2px] text-[31px] leading-[36px] tracking-[0.4px]">jingyan.baidu.com</span>
    </div>
  );
}

export default function App() {
  return (
    <div className="relative flex h-[787px] w-[1269px] flex-col overflow-hidden bg-[#e3e3e3] font-['Liberation_Sans','Noto_Sans_CJK_SC',sans-serif] text-[12px] leading-none text-[#1f1f1f]">
      <svg width="0" height="0" className="absolute">
        <defs>
          <linearGradient id="gpanel" x1="0" y1="0" x2="0" y2="1">
            <stop offset="0" stopColor="#fafafa" />
            <stop offset="1" stopColor="#bcc0c9" />
          </linearGradient>
          <linearGradient id="gcol" x1="0" y1="0" x2="1" y2="0">
            <stop offset="0" stopColor="#fff" />
            <stop offset=".6" stopColor="#c3c6cf" />
            <stop offset="1" stopColor="#eee" />
          </linearGradient>
        </defs>
      </svg>
      <TitleRow />
      <TabBar />
      <Ribbon />
      <div className="h-[26px] shrink-0" />
      <div className="flex h-[592px] shrink-0">
        <PropertiesPanel />
        <CanvasArea />
        <ProjectBrowser />
      </div>
      <StatusBar />
      <Annotations />
    </div>
  );
}
